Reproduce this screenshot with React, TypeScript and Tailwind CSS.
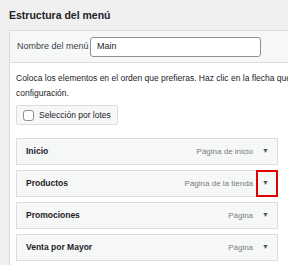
const items = [
  { label: 'Inicio', type: 'Página de inicio' },
  { label: 'Productos', type: 'Página de la tienda', highlight: true },
  { label: 'Promociones', type: 'Página' },
  { label: 'Venta por Mayor', type: 'Página' },
]

export default function App() {
  return (
    <div className="h-[265px] w-[288px] overflow-hidden bg-[#f0f0f1] text-[#1d2327] font-['Liberation_Sans',Arial,sans-serif]">
      <h2 className="pl-[9px] pt-[7px] h-[30px] text-[10.5px] font-bold leading-[16px]">Estructura del menú</h2>
      <div className="ml-[9px] w-[300px] h-[235px] bg-white border-l border-t border-[#dcdcde]">
        <div className="flex items-center h-[32px] bg-[#f6f7f7] border-b border-[#dcdcde] pl-[7px]">
          <span className="w-[73px] whitespace-nowrap text-[9px] text-[#3c434a]">Nombre del menú</span>
          <div className="flex items-center w-[171px] h-[20px] bg-white border border-[#8c8f94] rounded-[3px] px-[6px] text-[9px]">Main</div>
        </div>
        <div className="pl-[6px] pt-[8px]">
          <p className="text-[8.5px] leading-[15px] whitespace-nowrap">
            Coloca los elementos en el orden que prefieras. Haz clic en la flecha que hay a la derecha del elemento para mostrar más opciones de
            <br />
            configuración.
          </p>
          <div className="mt-[4px] flex items-center gap-[5px] w-[102px] h-[20px] bg-[#f6f7f7] border border-[#dcdcde] rounded-[2px] px-[6px] whitespace-nowrap">
            <span className="w-[11px] h-[11px] border border-[#8c8f94] rounded-[3px] bg-white shrink-0" />
            <span className="text-[8.5px]">Selección por lotes</span>
          </div>
          <div className="mt-[13px] flex flex-col gap-[5px] w-[262px]">
            {items.map((it) => (
              <div key={it.label} className="relative flex items-center h-[27px] bg-[#f6f7f7] border border-[#dcdcde] pl-[9px] pr-[8px]">
                <span className="text-[8.5px] font-bold flex-1">{it.label}</span>
                <span className="text-[8px] text-[#787c82]">{it.type}</span>
                <span className="ml-[9px] text-[7px] text-[#50575e]">▼</span>
                {it.highlight && (
                  <span className="absolute right-[-1px] top-[-1px] w-[22px] h-[27px] border-[2px] border-[#e00000]" />
                )}
              </div>
            ))}
          </div>
        </div>
      </div>
    </div>
  )
}
